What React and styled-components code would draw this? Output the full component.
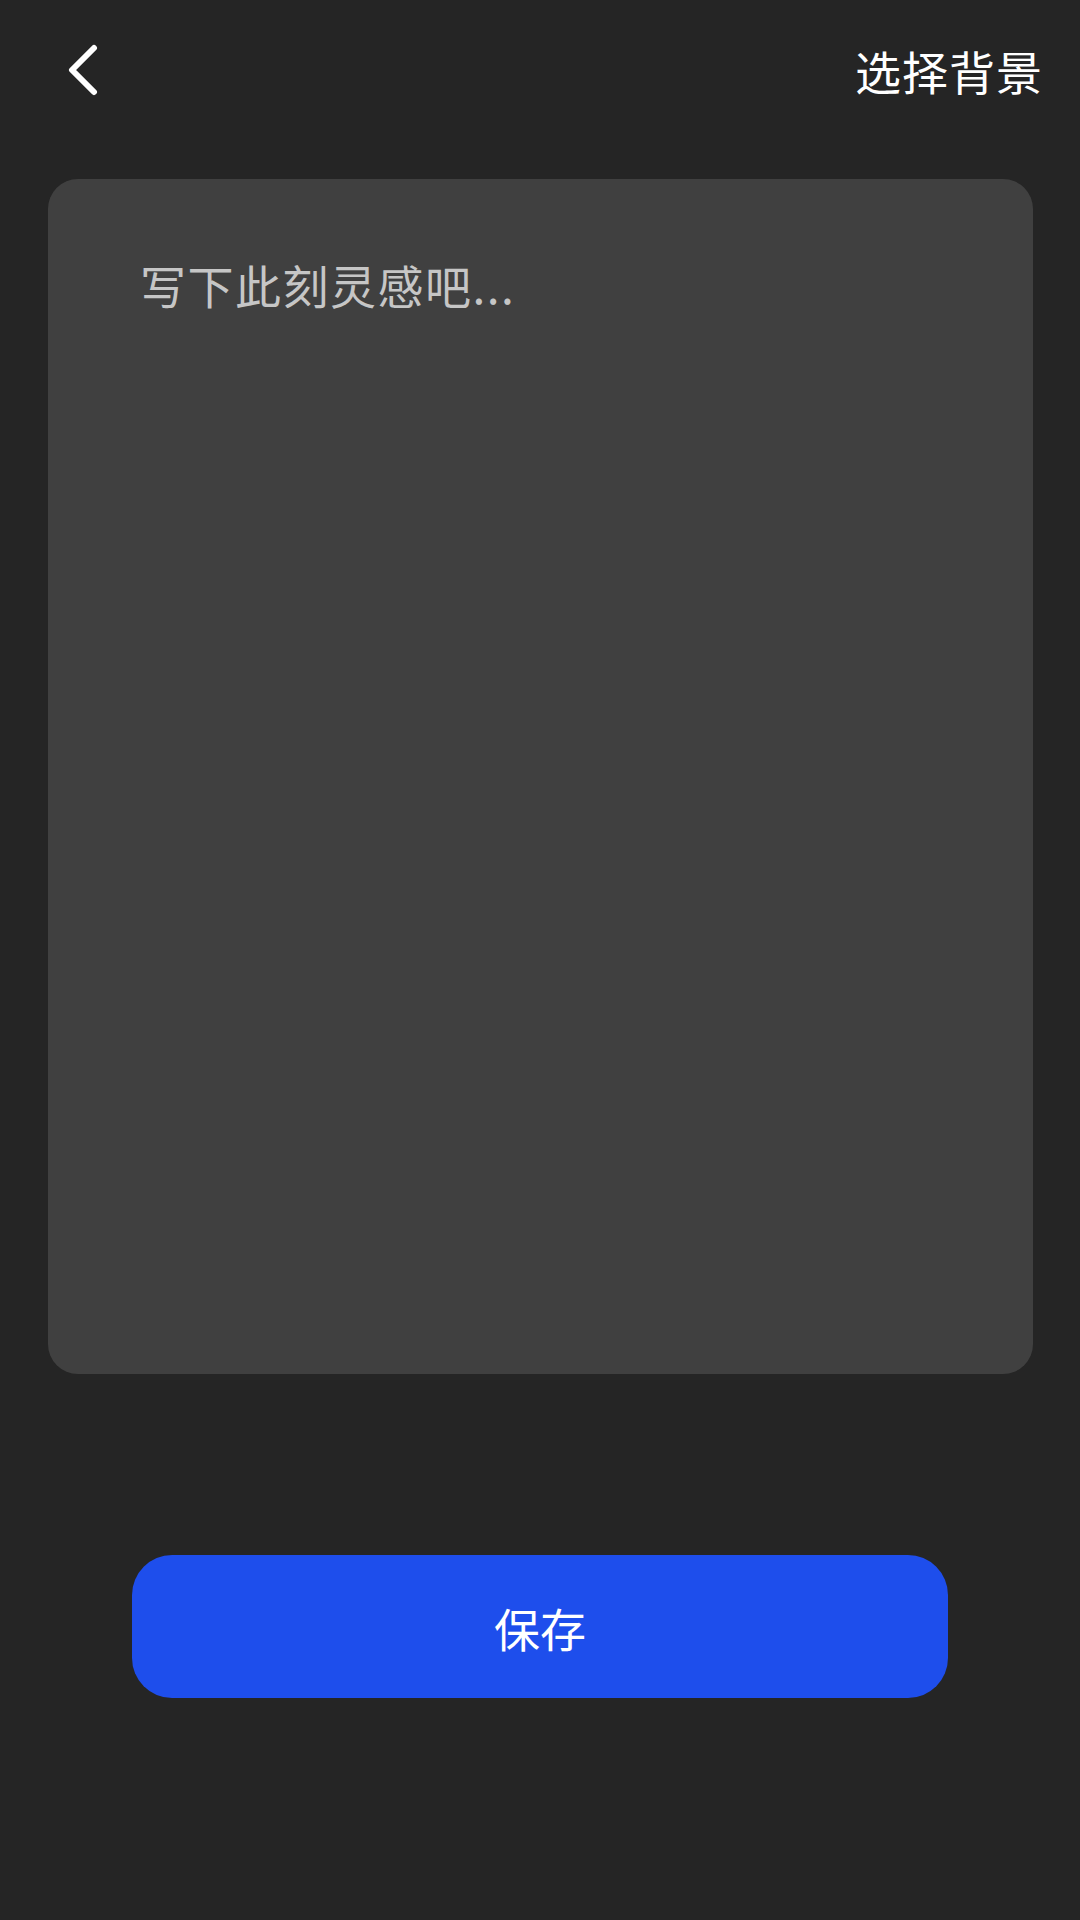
import React, { useState } from "react";
import styled, { createGlobalStyle } from "styled-components";

const GlobalStyle = createGlobalStyle`
  html, body {
    margin: 0;
    padding: 0;
    background: #252525;
  }
  body {
    font-family: "Noto Sans CJK SC", "Noto Sans", sans-serif;
  }
`;

const Page = styled.div`
  width: 1080px;
  height: 1920px;
  background: #252525;
  display: flex;
  flex-direction: column;
`;

const Header = styled.header`
  height: 140px;
  display: flex;
  align-items: center;
  justify-content: space-between;
  padding: 0 37px 0 66px;
  box-sizing: border-box;
`;

const BackButton = styled.button`
  width: 34px;
  height: 52px;
  padding: 0;
  border: none;
  background: none;
  display: flex;
  align-items: center;
  justify-content: center;
  cursor: pointer;
`;

const Title = styled.span`
  color: #ffffff;
  font-size: 46px;
  line-height: 1;
  letter-spacing: 1px;
`;

const Card = styled.div`
  margin: 39px 47px 0 48px;
  height: 1195px;
  background: #404040;
  border-radius: 30px;
  padding: 76px 92px;
  box-sizing: border-box;
  display: flex;
`;

const Editor = styled.textarea`
  flex: 1;
  border: none;
  outline: none;
  resize: none;
  background: transparent;
  padding: 0;
  margin: 0;
  color: #ffffff;
  font-family: "Noto Sans CJK SC", "Noto Sans", sans-serif;
  font-size: 46px;
  line-height: 1.3;
  letter-spacing: 1.5px;

  &::placeholder {
    color: #c6c6c6;
  }
`;

const SaveButton = styled.button`
  margin: 181px auto 0;
  width: 816px;
  height: 143px;
  border: none;
  border-radius: 40px;
  background: #1e4eec;
  color: #ffffff;
  font-family: "Noto Sans CJK SC", "Noto Sans", sans-serif;
  font-size: 46px;
  cursor: pointer;
`;

const ChevronLeft = () => (
  <svg width="34" height="52" viewBox="0 0 34 52" fill="none">
    <path
      d="M28 4 L6 26 L28 48"
      stroke="#ffffff"
      strokeWidth="6"
      strokeLinecap="round"
      strokeLinejoin="round"
    />
  </svg>
);

const App = () => {
  const [text, setText] = useState("");

  return (
    <Page>
      <GlobalStyle />
      <Header>
        <BackButton aria-label="返回">
          <ChevronLeft />
        </BackButton>
        <Title>选择背景</Title>
      </Header>
      <Card>
        <Editor
          value={text}
          onChange={(e) => setText(e.target.value)}
          placeholder="写下此刻灵感吧..."
        />
      </Card>
      <SaveButton>保存</SaveButton>
    </Page>
  );
};

export default App;
